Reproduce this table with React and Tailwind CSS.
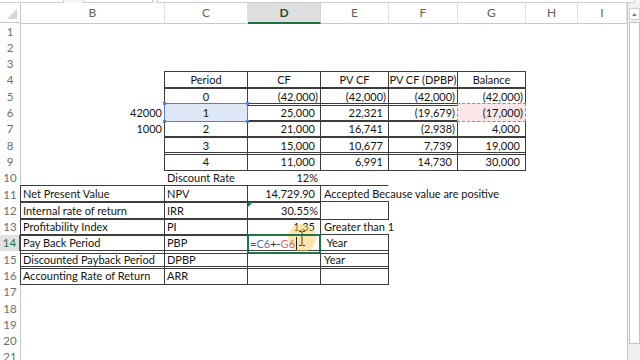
import React from "react";

const BD = "border border-[#3d3d3d]";
const NB = "border border-transparent";
const CEN = "justify-center";
const LFT = "justify-start pl-[2px]";
const NEG = "justify-end pr-[2px]";
const POS = "justify-end pr-[5px]";

const E = [NB, null];

function Formula() {
  return (
    <span className="relative flex items-start">
      <span className="text-[#4a4a4a]">=</span>
      <span className="text-[#5470c2]">C6</span>
      <span className="text-[#333333]">+-</span>
      <span className="text-[#d2667a]">G6</span>
      <span className="ml-px mt-[1px] h-[13px] w-px bg-[#222222]" />
    </span>
  );
}

const rows = [
  [E, E, E, E, E, E, E, E],
  [E, E, E, E, E, E, E, E],
  [E, E, E, E, E, E, E, E],
  [E, [BD + " " + CEN, "Period"], [BD + " " + CEN, "CF"], [BD + " " + CEN, "PV CF"], [BD + " " + CEN, "PV CF (DPBP)"], [BD + " " + CEN, "Balance"], E, E],
  [E, [BD + " " + CEN, "0"], [BD + " " + NEG, "(42,000)"], [BD + " " + NEG, "(42,000)"], [BD + " " + NEG, "(42,000)"], [BD + " " + NEG, "(42,000)"], E, E],
  [
    [NB + " justify-end pr-[2px]", "42000"],
    ["border border-[#5a7ec8] bg-[#dde7f5] z-10 justify-center", "1", "c6"],
    [BD + " " + POS, "25,000"],
    [BD + " " + POS, "22,321"],
    [BD + " " + NEG, "(19,679)"],
    ["border border-dashed border-[#dc6b7f] bg-[#fbe6ea] z-10 justify-end pr-[2px]", "(17,000)"],
    E,
    E,
  ],
  [[NB + " justify-end pr-[2px]", "1000"], [BD + " " + CEN, "2"], [BD + " " + POS, "21,000"], [BD + " " + POS, "16,741"], [BD + " " + NEG, "(2,938)"], [BD + " " + POS, "4,000"], E, E],
  [E, [BD + " " + CEN, "3"], [BD + " " + POS, "15,000"], [BD + " " + POS, "10,677"], [BD + " " + POS, "7,739"], [BD + " " + POS, "19,000"], E, E],
  [E, [BD + " " + CEN, "4"], [BD + " " + POS, "11,000"], [BD + " " + POS, "6,991"], [BD + " " + POS, "14,730"], [BD + " " + POS, "30,000"], E, E],
  [E, [NB + " " + LFT, "Discount Rate"], [NB + " justify-end pr-[2px]", "12%"], E, E, E, E, E],
  [
    [BD + " " + LFT, "Net Present Value"],
    [BD + " " + LFT, "NPV"],
    [BD + " " + POS, "14,729.90"],
    ["border border-transparent border-t-[#3d3d3d] border-l-[#3d3d3d] justify-start pl-[3px]", "Accepted Because value are positive"],
    E, E, E, E,
  ],
  [
    [BD + " " + LFT, "Internal rate of return"],
    [BD + " " + LFT, "IRR"],
    [BD + " " + NEG, "30.55%", "tri"],
    [BD, null],
    E, E, E, E,
  ],
  [
    [BD + " " + LFT, "Profitability Index"],
    [BD + " " + LFT, "PI"],
    [BD + " " + POS, "1.35"],
    ["border border-transparent border-l-[#3d3d3d] justify-start pl-[3px]", "Greater than 1"],
    E, E, E, E,
  ],
  [
    [BD + " " + LFT, "Pay Back Period"],
    [BD + " " + LFT, "PBP"],
    ["border-2 border-[#217346] z-10 justify-start pl-px", null, "formula"],
    [BD + " justify-start pl-[3px] whitespace-pre", " Year"],
    E, E, E, E,
  ],
  [
    [BD + " " + LFT, "Discounted Payback Period"],
    [BD + " " + LFT, "DPBP"],
    [BD, null],
    [BD + " justify-start pl-[3px]", "Year"],
    E, E, E, E,
  ],
  [
    [BD + " " + LFT, "Accounting Rate of Return"],
    [BD + " " + LFT, "ARR"],
    [BD, null],
    [BD, null],
    E, E, E, E,
  ],
  [E, E, E, E, E, E, E, E],
  [E, E, E, E, E, E, E, E],
  [E, E, E, E, E, E, E, E],
  [E, E, E, E, E, E, E, E],
  [E, E, E, E, E, E, E, E],
];

const LETTERS = ["B", "C", "D", "E", "F", "G", "H", "I"];

function Cell({ cls, text, extra }) {
  return (
    <div className={"relative -ml-px -mt-px flex items-start whitespace-nowrap pt-[0.5px] leading-[16px] " + cls}>
      {extra === "c6" && (
        <>
          <span className="absolute -left-[2px] -top-[2px] h-[3px] w-[3px] bg-[#5a7ec8]" />
          <span className="absolute -right-[2px] -top-[2px] h-[3px] w-[3px] bg-[#5a7ec8]" />
          <span className="absolute -left-[2px] -bottom-[2px] h-[3px] w-[3px] bg-[#5a7ec8]" />
          <span className="absolute -right-[2px] -bottom-[2px] h-[3px] w-[3px] bg-[#5a7ec8]" />
        </>
      )}
      {extra === "tri" && (
        <span className="absolute left-0 top-0 h-0 w-0 border-t-[5px] border-r-[5px] border-t-[#1f7a45] border-r-transparent" />
      )}
      {extra === "formula" ? <Formula /> : text}
    </div>
  );
}

export default function App() {
  return (
    <div className="relative h-[360px] w-[640px] overflow-hidden bg-white font-['Lato',sans-serif] text-[11px] text-[#141414]">
      {/* remnants of formula bar */}
      <div className="flex h-[3px] bg-[#f4f4f4]">
        <div className="w-[64px] border-b border-r border-[#cfcfcf] bg-white" />
        <div className="w-[19px]" />
        <div className="w-[70px] border-b border-l border-r border-[#cfcfcf] bg-white" />
        <div className="w-[4px]" />
        <div className="mr-[5px] flex-1 border-b border-l border-r border-[#cfcfcf] bg-white" />
      </div>
      <div className="flex">
        <div className="w-[627px] shrink-0">
          {/* column headers */}
          <div className="flex h-[20px]">
            <div className="relative w-[21px] shrink-0 border-b border-r border-[#c8c8c8]">
              <svg className="absolute bottom-[3px] right-[3px]" width="10" height="10" viewBox="0 0 10 10">
                <polygon points="10,0 10,10 0,10" fill="#d6d6d6" />
              </svg>
            </div>
            <div className="grid flex-1 grid-cols-[144px_83px_73px_68px_69px_68px_52px_49px]">
              {LETTERS.map((l) =>
                l === "D" ? (
                  <div
                    key={l}
                    className="flex items-center justify-center border-b-2 border-r border-b-[#217346] border-r-[#d5d5d5] bg-[#dedede] pt-[1px] text-[12px] font-bold text-[#2a4a36]"
                  >
                    {l}
                  </div>
                ) : (
                  <div
                    key={l}
                    className="flex items-center justify-center border-b border-r border-b-[#c8c8c8] border-r-[#e0e0e0] text-[12px] text-[#616161]"
                  >
                    {l}
                  </div>
                )
              )}
            </div>
          </div>
          {/* rows */}
          {rows.map((row, i) => (
            <div key={i} className="flex h-[16.3px]">
              {i === 13 ? (
                <div className="flex w-[21px] shrink-0 items-center justify-center border-r-2 border-[#217346] bg-[#e1e1e1] text-[11.5px] text-[#217346]">
                  {i + 1}
                </div>
              ) : (
                <div className="flex w-[21px] shrink-0 items-center justify-center border-r border-[#c8c8c8] text-[11.5px] text-[#6e6e6e]">
                  {i + 1}
                </div>
              )}
              <div className="grid flex-1 grid-cols-[144px_83px_73px_68px_69px_68px_52px_49px]">
                {row.map((c, j) => (
                  <Cell key={j} cls={c[0]} text={c[1]} extra={c[2]} />
                ))}
              </div>
            </div>
          ))}
        </div>
        {/* vertical scrollbar */}
        <div className="flex h-[360px] w-[13px] shrink-0 flex-col items-center border-l border-[#c8c8c8] bg-[#f0f0f0] pt-[5px]">
          <div className="flex h-[12px] w-[11px] items-center justify-center border border-[#d0d0d0] bg-white">
            <svg width="5" height="3" viewBox="0 0 5 3">
              <polygon points="2.5,0 5,3 0,3" fill="#808080" />
            </svg>
          </div>
          <div className="mt-[2px] h-[322px] w-[11px] border border-[#c4c4c4] bg-white" />
        </div>
      </div>
      {/* mouse highlight + I-beam */}
      <div className="absolute left-[288px] top-[224px] h-[28px] w-[28px] rounded-full bg-[rgba(247,205,95,0.5)]" />
      <svg className="absolute left-[298px] top-[231px]" width="8" height="15" viewBox="0 0 8 15">
        <path d="M1 0.5H3.5M4.5 0.5H7M4 1V14M1 14.5H3.5M4.5 14.5H7" stroke="#3a3a3a" strokeWidth="1" fill="none" />
      </svg>
    </div>
  );
}
